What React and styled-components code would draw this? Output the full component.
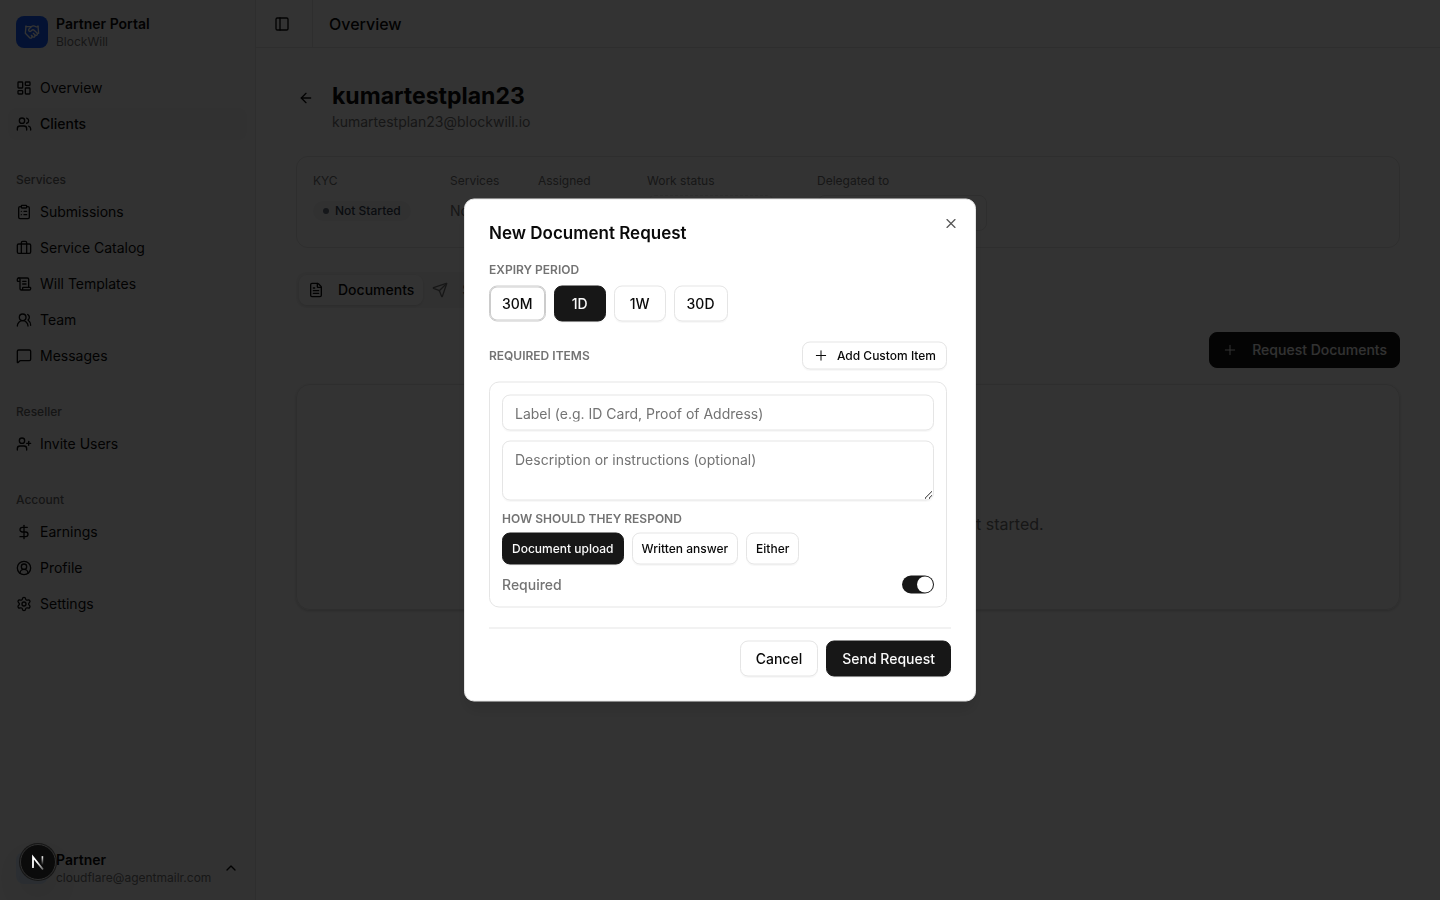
import React, { useState } from 'react'
import styled, { createGlobalStyle, css } from 'styled-components'
import {
  ArrowLeft,
  Briefcase,
  ChevronUp,
  CircleUserRound,
  ClipboardList,
  DollarSign,
  FileText,
  Handshake,
  LayoutDashboard,
  MessageSquare,
  PanelLeft,
  Plus,
  ScrollText,
  Send,
  Settings,
  UserPlus,
  Users,
  UsersRound,
  X
} from 'lucide-react'

const GlobalStyle = createGlobalStyle`
  *, *::before, *::after {
    box-sizing: border-box;
  }
  body {
    margin: 0;
    color: #0a0a0a;
    background: #fff;
    font-family: Inter, 'Liberation Sans', sans-serif;
    font-size: 14px;
    line-height: 20px;
  }
  button, input, textarea, select {
    margin: 0;
    color: inherit;
    font: inherit;
  }
  button {
    cursor: pointer;
  }
  h1, h2, p, ul, dl, dd {
    margin: 0;
    padding: 0;
  }
`

const Shell = styled.div`
  display: flex;
  min-height: 100vh;
`

const Sidebar = styled.aside`
  display: flex;
  flex-direction: column;
  flex: none;
  width: 256px;
  border-right: 1px solid #e5e5e5;
  background: #fafafa;
`

const Brand = styled.div`
  display: flex;
  align-items: center;
  gap: 8px;
  padding: 14px 16px;
`

const BrandMark = styled.div`
  display: flex;
  align-items: center;
  justify-content: center;
  width: 32px;
  height: 32px;
  border-radius: 8px;
  color: #fff;
  background: #155dfc;
`

const TwoLines = styled.div`
  display: flex;
  flex-direction: column;
  flex: 1;
  min-width: 0;
`

const Strong = styled.span`
  line-height: 20px;
  font-weight: 600;
`

const Small = styled.span`
  color: #737373;
  font-size: 12px;
  line-height: 16px;
`

const Groups = styled.div`
  display: flex;
  flex-direction: column;
  gap: 8px;
`

const Group = styled.nav`
  padding: 8px;
`

const GroupLabel = styled.div`
  display: flex;
  align-items: center;
  height: 32px;
  padding: 0 8px;
  color: #6c6c6c;
  font-size: 12px;
  font-weight: 500;
`

const NavList = styled.ul`
  display: flex;
  flex-direction: column;
  gap: 4px;
  list-style: none;
`

const NavLink = styled.a`
  display: flex;
  align-items: center;
  gap: 8px;
  height: 32px;
  padding: 0 8px;
  border-radius: 8px;
  color: #0a0a0a;
  text-decoration: none;
  font-weight: ${props => (props.$active ? 500 : 400)};
  background: ${props => (props.$active ? '#f5f5f5' : 'transparent')};
`

const Account = styled.button`
  display: flex;
  align-items: center;
  gap: 8px;
  margin: auto 8px 8px;
  padding: 6px 8px;
  border: 0;
  border-radius: 8px;
  text-align: left;
  background: transparent;
`

const Avatar = styled.span`
  width: 32px;
  height: 32px;
  border-radius: 8px;
  background: #dbeafe;
`

const Main = styled.main`
  flex: 1;
  min-width: 0;
`

const Topbar = styled.header`
  display: flex;
  align-items: center;
  height: 48px;
  border-bottom: 1px solid #e5e5e5;
  font-size: 16px;
  font-weight: 500;
`

const PanelToggle = styled.button`
  display: flex;
  align-items: center;
  justify-content: center;
  width: 57px;
  height: 100%;
  margin-right: 16px;
  padding: 0 4px 0 0;
  border: 0;
  border-right: 1px solid #e5e5e5;
  background: transparent;
`

const Content = styled.div`
  display: flex;
  flex-direction: column;
  gap: 24px;
  padding: 32px 40px;
`

const ClientHeader = styled.div`
  display: flex;
  align-items: flex-start;
  gap: 16px;
`

const BackLink = styled.a`
  display: flex;
  padding: 10px 2px;
  color: inherit;
`

const ClientName = styled.h1`
  font-size: 23px;
  line-height: 32px;
  font-weight: 700;
`

const Muted = styled.p`
  color: #737373;
`

const Facts = styled.dl`
  display: flex;
  height: 92px;
  padding: 16px;
  border: 1px solid #e5e5e5;
  border-radius: 12px;
`

const Fact = styled.div`
  flex: none;
  width: ${props => props.$width};
  color: #737373;

  dt {
    margin-bottom: 6px;
    font-size: 12px;
    line-height: 16px;
  }
  dd {
    display: flex;
    align-items: center;
    height: 32px;
  }
`

const Badge = styled.span`
  display: inline-flex;
  align-items: center;
  gap: 6px;
  padding: 2px 10px;
  border-radius: 10px;
  color: #364153;
  background: #f3f4f6;
  font-size: 12px;
  line-height: 16px;
  font-weight: 500;

  &::before {
    content: '';
    width: 6px;
    height: 6px;
    border-radius: 3px;
    background: #6a7282;
  }
`

const StatusButton = styled.button`
  width: 128px;
  height: 32px;
  border: 1px dashed #e5e5e5;
  border-radius: 8px;
  background: transparent;
`

const Delegate = styled.select`
  appearance: none;
  align-self: flex-start;
  flex: none;
  width: 170px;
  height: 36px;
  padding: 0 12px;
  border: 1px solid #e5e5e5;
  border-radius: 8px;
  background: transparent;
`

const Tabs = styled.div`
  display: flex;
  align-self: flex-start;
  padding: 3px;
  border-radius: 10px;
  background: #f5f5f5;
`

const Tab = styled.button`
  display: flex;
  align-items: center;
  gap: 14px;
  height: 30px;
  padding: 0 9px;
  border: 0;
  border-radius: 8px;
  color: ${props => (props.$active ? '#0a0a0a' : '#737373')};
  font-weight: 500;
  background: ${props => (props.$active ? '#fff' : 'transparent')};
  box-shadow: ${props => (props.$active ? '0 1px 3px #0002' : 'none')};
`

const Documents = styled.section`
  display: flex;
  flex-direction: column;
  align-items: flex-end;
  gap: 16px;
`

const Empty = styled.div`
  display: flex;
  align-items: center;
  justify-content: center;
  width: 100%;
  height: 226px;
  padding-top: 54px;
  border: 1px solid #e5e5e5;
  border-radius: 14px;
  color: #737373;
  font-size: 16px;
  box-shadow: 0 1px 3px #0003;
`

const Backdrop = styled.div`
  position: fixed;
  inset: 0;
  background: rgba(0, 0, 0, 0.8);
`

const Dialog = styled.form`
  position: fixed;
  top: 50%;
  left: 50%;
  display: flex;
  flex-direction: column;
  gap: 20px;
  width: 100%;
  max-width: 512px;
  padding: 24px;
  border: 1px solid #e5e5e5;
  border-radius: 10px;
  background: #fff;
  transform: translate(-50%, -50%);
  box-shadow: 0 10px 15px -3px #0002;
`

const DialogTitle = styled.h2`
  font-size: 17px;
  line-height: 18px;
  font-weight: 600;
`

const CloseButton = styled.button`
  position: absolute;
  top: 16px;
  right: 16px;
  display: flex;
  padding: 0;
  border: 0;
  color: #555;
  background: transparent;
`

const DialogBody = styled.div`
  display: flex;
  flex-direction: column;
  gap: 20px;
  padding-right: 4px;
`

const Stack = styled.div`
  display: flex;
  flex-direction: column;
  gap: ${props => props.$gap};
`

const Row = styled.div`
  display: flex;
  align-items: center;
  justify-content: ${props => props.$justify || 'flex-start'};
  gap: 8px;
`

const Eyebrow = styled.span`
  color: #737373;
  font-size: 12px;
  line-height: 16px;
  font-weight: 600;
  text-transform: uppercase;
`

const sizes = {
  sm: css`
    height: 28px;
    padding: 0 10px;
    font-size: 12px;
  `,
  md: css`
    height: 32px;
    padding: 0 9px;
    font-size: 12px;
  `,
  option: css`
    height: 36px;
    min-width: 52px;
    padding: 0 12px;
  `,
  lg: css`
    height: 36px;
    padding: 0 15px;
  `
}

const Button = styled.button`
  display: inline-flex;
  align-items: center;
  justify-content: center;
  border: 1px solid ${props => (props.$solid ? '#171717' : '#e5e5e5')};
  border-radius: 8px;
  color: ${props => (props.$solid ? '#fafafa' : '#0a0a0a')};
  background: ${props => (props.$solid ? '#171717' : '#fff')};
  font-weight: 500;
  white-space: nowrap;
  box-shadow: 0 1px 1px #00000008;
  ${props => sizes[props.$size]}

  &:focus-visible {
    outline: none;
    border-color: #ccc;
    box-shadow: 0 0 0 1px #ccc inset;
  }
`

const ButtonIcon = styled.span`
  display: flex;
  margin-right: ${props => props.$gap};
`

const ItemCard = styled.div`
  display: flex;
  flex-direction: column;
  gap: 10px;
  padding: 12px;
  border: 1px solid #e5e5e5;
  border-radius: 10px;
`

const field = css`
  display: block;
  width: 100%;
  border: 1px solid #e5e5e5;
  border-radius: 8px;
  background: #fff;
  box-shadow: 0 1px 1px #00000008;

  &::placeholder {
    color: #737373;
    opacity: 1;
  }
`

const TextInput = styled.input`
  ${field}
  height: 36px;
  padding: 4px 12px;
`

const TextArea = styled.textarea`
  ${field}
  height: 60px;
  padding: 8px 12px;
  resize: vertical;
`

const SwitchLabel = styled.label`
  display: flex;
  align-items: center;
  justify-content: space-between;
  height: 20px;
  color: #737373;
  font-weight: 500;
`

const Switch = styled.input`
  appearance: none;
  display: flex;
  justify-content: flex-start;
  width: 32px;
  height: 18px;
  margin: 0;
  padding: 1px;
  border-radius: 9px;
  background: #d4d4d4;

  &::before {
    content: '';
    width: 16px;
    height: 16px;
    border-radius: 8px;
    background: #fff;
  }
  &:checked {
    justify-content: flex-end;
    background: #171717;
  }
`

const DialogFooter = styled.div`
  display: flex;
  justify-content: flex-end;
  gap: 8px;
  padding-top: 12px;
  border-top: 1px solid #e5e5e5;
`

const DevBadge = styled.button`
  position: fixed;
  left: 20px;
  bottom: 20px;
  display: flex;
  align-items: center;
  justify-content: center;
  width: 36px;
  height: 36px;
  padding: 0;
  border: 1px solid #303030;
  border-radius: 18px;
  background: #0b0b0b;
  box-shadow: 0 0 0 1px #171717, 0 16px 32px -8px #0000003d;
`

const NAV = [
  {
    items: [
      ['Overview', LayoutDashboard],
      ['Clients', Users]
    ]
  },
  {
    label: 'Services',
    items: [
      ['Submissions', ClipboardList],
      ['Service Catalog', Briefcase],
      ['Will Templates', ScrollText],
      ['Team', UsersRound],
      ['Messages', MessageSquare]
    ]
  },
  { label: 'Reseller', items: [['Invite Users', UserPlus]] },
  {
    label: 'Account',
    items: [
      ['Earnings', DollarSign],
      ['Profile', CircleUserRound],
      ['Settings', Settings]
    ]
  }
]

const PERIODS = ['30M', '1D', '1W', '30D']
const RESPONSES = ['Document upload', 'Written answer', 'Either']

const NextLogo = () => (
  <svg width="18" height="18" viewBox="0 0 18 18" fill="none" aria-hidden="true">
    <defs>
      <linearGradient id="stem" x1="0" y1="3" x2="0" y2="12" gradientUnits="userSpaceOnUse">
        <stop stopColor="#fff" />
        <stop offset="1" stopColor="#fff" stopOpacity="0" />
      </linearGradient>
      <linearGradient id="slash" x1="8" y1="9" x2="15" y2="17" gradientUnits="userSpaceOnUse">
        <stop stopColor="#fff" />
        <stop offset="1" stopColor="#fff" stopOpacity="0.3" />
      </linearGradient>
    </defs>
    <path d="M4 15V4l10 12.5" stroke="url(#slash)" strokeWidth="1.8" />
    <path d="M13.4 3.2v9" stroke="url(#stem)" strokeWidth="1.6" />
  </svg>
)

const AppSidebar = () => (
  <Sidebar>
    <Brand>
      <BrandMark>
        <Handshake size={16} />
      </BrandMark>
      <TwoLines>
        <Strong>Partner Portal</Strong>
        <Small>BlockWill</Small>
      </TwoLines>
    </Brand>
    <Groups>
      {NAV.map((group, i) => (
        <Group key={i} aria-label={group.label}>
          {group.label && <GroupLabel>{group.label}</GroupLabel>}
          <NavList>
            {group.items.map(([name, Icon]) => (
              <li key={name}>
                <NavLink href="#" $active={name === 'Clients'}>
                  <Icon size={16} />
                  {name}
                </NavLink>
              </li>
            ))}
          </NavList>
        </Group>
      ))}
    </Groups>
    <Account type="button">
      <Avatar />
      <TwoLines>
        <Strong>Partner</Strong>
        <Small>cloudflare@agentmailr.com</Small>
      </TwoLines>
      <ChevronUp size={16} />
    </Account>
  </Sidebar>
)

const ClientPage = () => (
  <Content>
    <ClientHeader>
      <BackLink href="#" aria-label="Back">
        <ArrowLeft size={16} />
      </BackLink>
      <div>
        <ClientName>kumartestplan23</ClientName>
        <Muted>kumartestplan23@blockwill.io</Muted>
      </div>
    </ClientHeader>
    <Facts>
      <Fact $width="137px">
        <dt>KYC</dt>
        <dd>
          <Badge>Not Started</Badge>
        </dd>
      </Fact>
      <Fact $width="88px">
        <dt>Services</dt>
        <dd>None</dd>
      </Fact>
      <Fact $width="109px">
        <dt>Assigned</dt>
        <dd>None</dd>
      </Fact>
      <Fact $width="170px">
        <dt>Work status</dt>
        <dd>
          <StatusButton type="button">None</StatusButton>
        </dd>
      </Fact>
      <Fact>
        <dt>Delegated to</dt>
        <dd>
          <Delegate aria-label="Delegated to">
            <option>None</option>
          </Delegate>
        </dd>
      </Fact>
    </Facts>
    <Tabs>
      <Tab type="button" $active>
        <FileText size={16} />
        Documents
      </Tab>
      <Tab type="button">
        <Send size={16} />
        Sent
      </Tab>
    </Tabs>
    <Documents>
      <Button type="button" $size="option" $solid>
        <ButtonIcon $gap="14px">
          <Plus size={16} strokeWidth={1.5} />
        </ButtonIcon>
        Request Documents
      </Button>
      <Empty>No document requests yet. Send one to get started.</Empty>
    </Documents>
  </Content>
)

const RequestDialog = () => {
  const [period, setPeriod] = useState('1D')
  const [response, setResponse] = useState('Document upload')
  const [required, setRequired] = useState(true)

  return (
    <Dialog role="dialog" aria-labelledby="dialog-title" onSubmit={e => e.preventDefault()}>
      <DialogTitle id="dialog-title">New Document Request</DialogTitle>
      <DialogBody>
        <Stack $gap="8px">
          <Eyebrow>Expiry period</Eyebrow>
          <Row>
            {PERIODS.map((name, i) => (
              <Button
                key={name}
                type="button"
                autoFocus={i === 0}
                $size="option"
                $solid={name === period}
                onClick={() => setPeriod(name)}
              >
                {name}
              </Button>
            ))}
          </Row>
        </Stack>
        <Stack $gap="12px">
          <Row $justify="space-between">
            <Eyebrow>Required items</Eyebrow>
            <Button type="button" $size="sm">
              <ButtonIcon $gap="8px">
                <Plus size={16} strokeWidth={1.5} />
              </ButtonIcon>
              Add Custom Item
            </Button>
          </Row>
          <ItemCard>
            <TextInput aria-label="Label" placeholder="Label (e.g. ID Card, Proof of Address)" />
            <TextArea aria-label="Description" placeholder="Description or instructions (optional)" />
            <Stack $gap="6px">
              <Eyebrow>How should they respond</Eyebrow>
              <Row>
                {RESPONSES.map(name => (
                  <Button
                    key={name}
                    type="button"
                    $size="md"
                    $solid={name === response}
                    onClick={() => setResponse(name)}
                  >
                    {name}
                  </Button>
                ))}
              </Row>
            </Stack>
            <SwitchLabel>
              Required
              <Switch
                type="checkbox"
                role="switch"
                checked={required}
                onChange={e => setRequired(e.target.checked)}
              />
            </SwitchLabel>
          </ItemCard>
        </Stack>
      </DialogBody>
      <DialogFooter>
        <Button type="button" $size="lg">
          Cancel
        </Button>
        <Button type="submit" $size="lg" $solid>
          Send Request
        </Button>
      </DialogFooter>
      <CloseButton type="button" aria-label="Close">
        <X size={16} strokeWidth={1.75} />
      </CloseButton>
    </Dialog>
  )
}

const App = () => (
  <>
    <GlobalStyle />
    <Shell>
      <AppSidebar />
      <Main>
        <Topbar>
          <PanelToggle type="button" aria-label="Toggle sidebar">
            <PanelLeft size={16} />
          </PanelToggle>
          Overview
        </Topbar>
        <ClientPage />
      </Main>
    </Shell>
    <Backdrop />
    <RequestDialog />
    <DevBadge type="button" aria-label="Dev tools">
      <NextLogo />
    </DevBadge>
  </>
)

export default App
